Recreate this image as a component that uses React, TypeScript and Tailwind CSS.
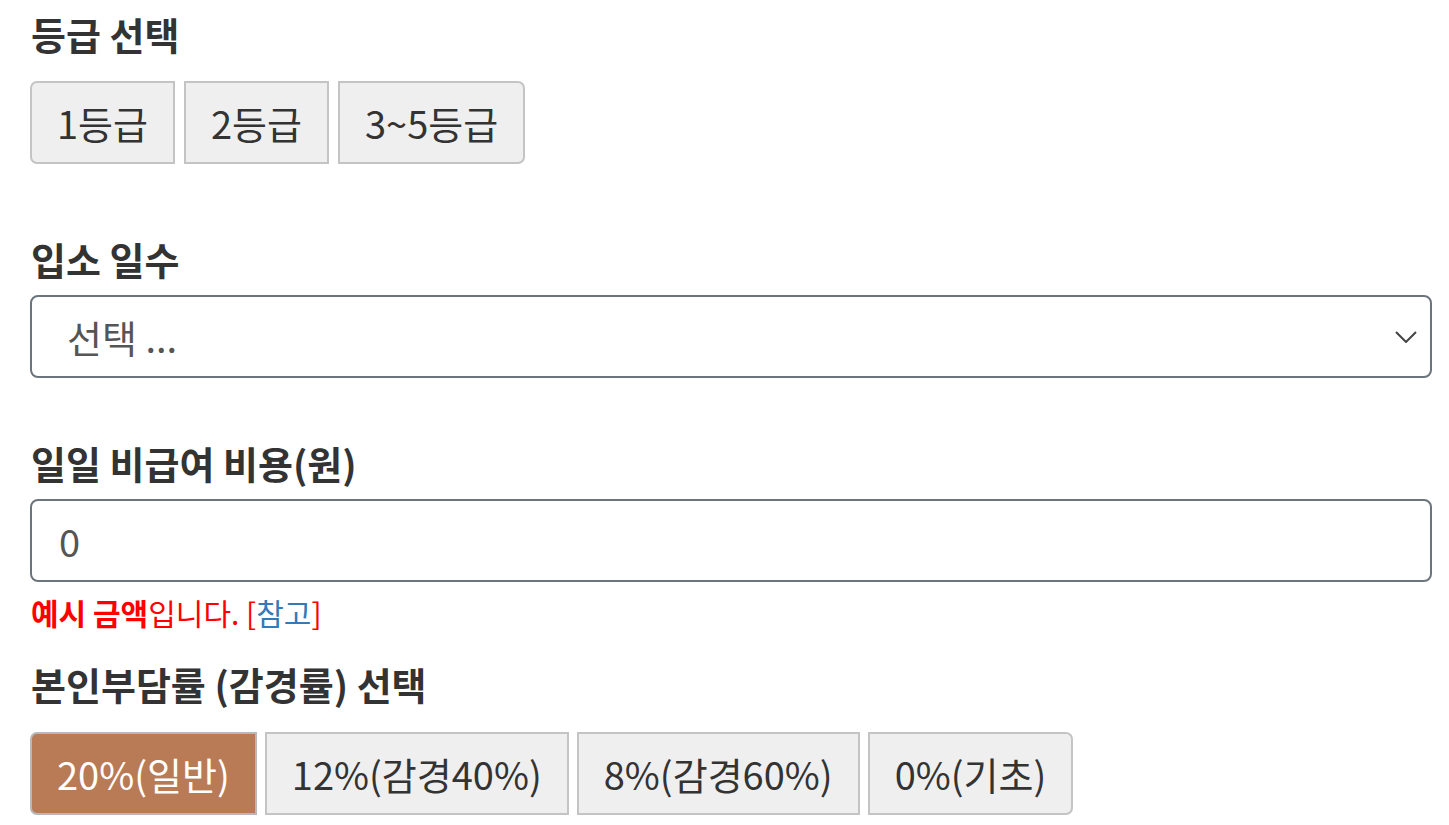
import { useState } from "react";

// 장기요양 비용 계산 폼 (정적)
const font = { fontFamily: '"Noto Sans CJK KR", "Noto Sans", sans-serif' };

const grades = ["1등급", "2등급", "3~5등급"];
const rates = ["20%(일반)", "12%(감경40%)", "8%(감경60%)", "0%(기초)"];

function GroupButton({
  label,
  active,
  first,
  last,
  onClick,
}: {
  label: string;
  active: boolean;
  first: boolean;
  last: boolean;
  onClick: () => void;
}) {
  return (
    <button
      onClick={onClick}
      className={`h-[83px] border-2 px-[25px] text-[38px] leading-none ${
        first ? "rounded-l-[7px]" : ""
      } ${last ? "rounded-r-[7px]" : ""} ${
        active
          ? "border-[#b8b8b8] bg-[#b97a56] text-white"
          : "border-[#c4c4c4] bg-[#efefef] text-[#333]"
      }`}
    >
      {label}
    </button>
  );
}

export default function App() {
  const [grade, setGrade] = useState<number | null>(null);
  const [rate, setRate] = useState(0);

  return (
    <div className="min-h-screen bg-white px-[30px] pt-[12px] text-[#333]" style={font}>
      {/* 등급 선택 */}
      <h3 className="pl-px text-[38px] font-bold leading-[44px]">등급 선택</h3>
      <div className="mt-[25px] flex gap-[9px]">
        {grades.map((g, i) => (
          <GroupButton
            key={g}
            label={g}
            active={grade === i}
            first={i === 0}
            last={i === grades.length - 1}
            onClick={() => setGrade(i)}
          />
        ))}
      </div>

      {/* 입소 일수 */}
      <h3 className="mt-[73px] pl-px text-[38px] font-bold leading-[44px]">입소 일수</h3>
      <div className="mt-[14px] flex h-[83px] w-[1402px] items-center justify-between rounded-[8px] border-2 border-[#6c757d] pl-[35px] pr-[13px]">
        <span className="text-[38px] text-[#555]">선택 ...</span>
        <svg width="22" height="12" viewBox="0 0 22 12" fill="none">
          <path d="M1 1l10 10L21 1" stroke="#444" strokeWidth="2" />
        </svg>
      </div>

      {/* 일일 비급여 비용 */}
      <h3 className="mt-[63px] pl-px text-[38px] font-bold leading-[44px]">일일 비급여 비용(원)</h3>
      <div className="mt-[14px] flex h-[83px] w-[1402px] items-center rounded-[8px] border-2 border-[#6c757d] pl-[27px]">
        <span className="text-[38px] text-[#555]">0</span>
      </div>
      <p className="mt-[10px] pl-px text-[30px] leading-[40px] text-[#ff0000]">
        <b>예시 금액</b>입니다. [<span className="text-[#337ab7]">참고</span>]
      </p>

      {/* 본인부담률 */}
      <h3 className="mt-[30px] pl-px text-[38px] font-bold leading-[44px]">본인부담률 (감경률) 선택</h3>
      <div className="mt-[26px] flex gap-[8px]">
        {rates.map((r, i) => (
          <GroupButton
            key={r}
            label={r}
            active={rate === i}
            first={i === 0}
            last={i === rates.length - 1}
            onClick={() => setRate(i)}
          />
        ))}
      </div>
    </div>
  );
}
